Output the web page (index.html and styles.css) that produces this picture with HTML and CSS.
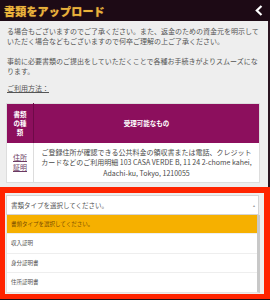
FILE: index.html
```html
<!DOCTYPE html>
<html lang="ja">
<head>
<meta charset="utf-8">
<title>書類をアップロード</title>
<link rel="stylesheet" href="styles.css">
</head>
<body>
<div class="app">
  <header class="topbar">
    <h1 class="title">書類をアップロード</h1>
    <span class="back" aria-label="戻る">
      <svg width="8" height="11" viewBox="0 0 8 11"><polyline points="6.5,1 1.8,5.5 6.5,10" fill="none" stroke="#ffffff" stroke-width="2.2" stroke-linejoin="miter"/></svg>
    </span>
  </header>
  <main class="content">
    <div class="intro">
      <p class="para">る場合もございますのでご了承ください。また、返金のための資金元を明示していただく場合などもございますので何卒ご理解の上ご了承ください。</p>
      <p class="para">事前に必要書類のご提出をしていただくことで各種お手続きがよりスムーズになります。</p>
      <p class="howto"><span class="howto-link">ご利用方法：</span></p>
    </div>
    <table class="doc-table">
      <thead>
        <tr>
          <th class="col-type">書類<br>の種<br>類</th>
          <th class="col-accept">受理可能なもの</th>
        </tr>
      </thead>
      <tbody>
        <tr>
          <td class="cell-type"><span class="type-link">住所<br>証明</span></td>
          <td class="cell-accept">ご登録住所が確認できる公共料金の領収書または電話、クレジットカードなどのご利用明細 103 CASA VERDE B, 11 24 2-chome kahei, Adachi-ku, Tokyo, 1210055</td>
        </tr>
      </tbody>
    </table>
    <section class="picker">
      <div class="select">
        <span class="select-text">書類タイプを選択してください。</span>
        <span class="caret">▴</span>
      </div>
      <ul class="options">
        <li class="option active">書類タイプを選択してください。</li>
        <li class="option">収入証明</li>
        <li class="option">身分証明書</li>
        <li class="option">住所証明書</li>
      </ul>
    </section>
  </main>
  <footer class="bottom"></footer>
</div>
</body>
</html>
```
FILE: styles.css
```css
* { box-sizing: border-box; }
html, body { margin: 0; padding: 0; }
body {
  width: 270px;
  height: 300px;
  overflow: hidden;
  background: #1b0b14;
  font-family: "Noto Sans CJK JP", "Noto Sans", sans-serif;
}
.app {
  display: flex;
  flex-direction: column;
  width: 270px;
  height: 300px;
}
.topbar {
  height: 21px;
  flex: none;
  background: #1d0a15;
  display: flex;
  align-items: center;
  justify-content: space-between;
  padding: 0 7px 0 4px;
}
.title {
  margin: 0;
  font-size: 11px;
  font-weight: 900;
  line-height: 14px;
  color: #eab23a;
  letter-spacing: 0.2px;
  text-shadow: 0 0 1px rgba(255, 200, 80, 0.5);
}
.back { display: flex; align-items: center; }
.content {
  flex: 1;
  background: #eeeeee;
  display: flex;
  flex-direction: column;
  border-right: 2px solid #2a1420;
}
.intro {
  padding: 5px 6px 0 7px;
}
.para {
  margin: 0 0 10px;
  font-size: 7px;
  line-height: 10px;
  color: #555555;
}
.howto {
  margin: -3px 0 10px;
  font-size: 7px;
  line-height: 10px;
  color: #555555;
}
.howto-link { text-decoration: underline; }
.doc-table {
  margin: 0 8px 4px 6px;
  border-collapse: collapse;
  background: #ffffff;
  border: 1px solid #dddddd;
}
.doc-table th {
  background: #8c0f5d;
  color: #ffffff;
  font-weight: 700;
  font-size: 6.5px;
  line-height: 9px;
  height: 39px;
  padding: 0;
}
.col-type {
  width: 27px;
  border-right: 1px solid #6e0a48;
}
.doc-table td {
  height: 40px;
  font-size: 7px;
  line-height: 10.5px;
  color: #4a4a4a;
  text-align: center;
  padding: 0;
}
.cell-type {
  border-right: 1px solid #dddddd;
}
.type-link {
  color: #6b3a63;
  text-decoration: underline;
}
.cell-accept {
  padding: 0 5px !important;
}
.picker {
  flex: none;
  border-style: solid;
  border-color: #ff2400;
  border-width: 6px 6px 5px 5px;
  background: #eeeeee;
  padding: 2px 4px 1px 1px;
  margin-right: -2px;
}
.select {
  width: 253px;
  height: 20px;
  background: #ffffff;
  border: 1px solid #d4d4d4;
  display: flex;
  align-items: center;
  justify-content: space-between;
  padding: 0 3px 0 4px;
}
.select-text {
  font-size: 6.5px;
  color: #555555;
  line-height: 10px;
}
.caret {
  font-size: 4px;
  color: #999999;
  line-height: 6px;
}
.options {
  list-style: none;
  margin: 0;
  padding: 0;
  background: #ffffff;
  border-right: 3px solid #c8c8c8;
  border-left: 1px solid #e2e2e2;
  border-bottom: 1px solid #e2e2e2;
}
.option {
  height: 19.25px;
  display: flex;
  align-items: center;
  padding-left: 4px;
  font-size: 5.5px;
  color: #555555;
  border-bottom: 1px solid #eeeeee;
}
.option:last-child { border-bottom: none; }
.option.active {
  background: #f6b000;
  color: #7a4e00;
}
.bottom {
  height: 3px;
  flex: none;
  background: #1b0b14;
}
```
